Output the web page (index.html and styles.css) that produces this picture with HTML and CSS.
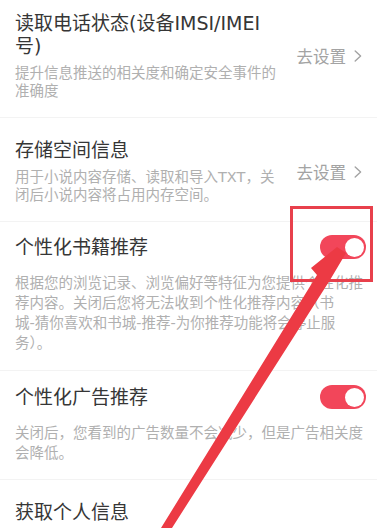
FILE: index.html
```html
<!DOCTYPE html>
<html lang="zh-CN">
<head>
<meta charset="utf-8">
<title>隐私设置</title>
<link rel="stylesheet" href="styles.css">
</head>
<body>
<div class="page">
  <div class="item item-link item-first">
    <div class="text">
      <div class="title title-narrow">读取电话状态(设备IMSI/IMEI号)</div>
      <div class="desc">提升信息推送的相关度和确定安全事件的准确度</div>
    </div>
    <div class="link">去设置<svg class="chev" width="8" height="12" viewBox="0 0 8 12"><polyline points="1.2,1 6.6,6 1.2,11" fill="none" stroke="#a3a3a3" stroke-width="1.4" stroke-linecap="round" stroke-linejoin="round"/></svg></div>
  </div>
  <div class="item item-link">
    <div class="text">
      <div class="title">存储空间信息</div>
      <div class="desc">用于小说内容存储、读取和导入TXT，关闭后小说内容将占用内存空间。</div>
    </div>
    <div class="link">去设置<svg class="chev" width="8" height="12" viewBox="0 0 8 12"><polyline points="1.2,1 6.6,6 1.2,11" fill="none" stroke="#a3a3a3" stroke-width="1.4" stroke-linecap="round" stroke-linejoin="round"/></svg></div>
  </div>
  <div class="item item-toggle">
    <div class="head">
      <div class="title">个性化书籍推荐</div>
      <div class="switch"><span class="knob"></span></div>
    </div>
    <div class="desc desc-wide">根据您的浏览记录、浏览偏好等特征为您提供个性化推荐内容。关闭后您将无法收到个性化推荐内容（书<span class="nobr">城-猜</span>你喜欢和书城-推荐-为你推荐功能将会停止服<span class="nobr">务）。</span></div>
  </div>
  <div class="item item-toggle item-toggle-last">
    <div class="head">
      <div class="title">个性化广告推荐</div>
      <div class="switch"><span class="knob"></span></div>
    </div>
    <div class="desc desc-wide">关闭后，您看到的广告数量不会减少，但是广告相关度会降低。</div>
  </div>
  <div class="item item-link item-last">
    <div class="text">
      <div class="title">获取个人信息</div>
    </div>
  </div>
</div>
<svg class="annot" width="391" height="528" viewBox="0 0 391 528">
  <rect x="291.5" y="207.5" width="80" height="73" fill="none" stroke="#e8404c" stroke-width="3"/>
  <polygon points="337,247 346,253 330,280 172,528 161,528 317,275 311,268" fill="#ec3a44"/>
</svg>
</body>
</html>
```
FILE: styles.css
```css
html, body {
  margin: 0;
  padding: 0;
  background: #ffffff;
}
body {
  width: 391px;
  height: 528px;
  overflow: hidden;
  position: relative;
  font-family: "DejaVu Sans", "Noto Sans CJK SC", sans-serif;
}
.page {
  display: flex;
  flex-direction: column;
}
.item {
  margin-right: 14px;
  padding-left: 15px;
  border-bottom: 1px solid #f3f3f3;
}
.item-link {
  display: flex;
  align-items: center;
  padding-top: 21px;
  padding-bottom: 17px;
  padding-right: 15px;
}
.item-first {
  padding-top: 12px;
}
.item-last {
  border-bottom: none;
}
.text {
  flex: 0 0 264px;
  display: flex;
  flex-direction: column;
  gap: 6px;
}
.title {
  font-size: 19px;
  line-height: 23px;
  color: #363636;
}
.title-narrow {
  max-width: 256px;
}
.desc {
  font-size: 14.5px;
  line-height: 18px;
  color: #b0b0b0;
}
.link {
  margin-left: auto;
  display: flex;
  align-items: center;
  gap: 8px;
  font-size: 16.5px;
  color: #a3a3a3;
  white-space: nowrap;
}
.chev {
  display: block;
}
.item-toggle {
  padding-top: 13px;
  padding-bottom: 17px;
  padding-right: 11px;
  display: flex;
  flex-direction: column;
  gap: 14px;
}
.item-toggle-last {
  padding-top: 14px;
  padding-bottom: 16px;
}
.head {
  display: flex;
  align-items: center;
  justify-content: space-between;
  height: 24px;
}
.desc-wide {
  line-height: 20px;
}
.nobr {
  white-space: nowrap;
}
.switch {
  width: 46px;
  height: 24px;
  border-radius: 12px;
  background: #f2465a;
  display: flex;
  align-items: center;
  justify-content: flex-end;
  padding-right: 2.5px;
  box-sizing: border-box;
}
.knob {
  width: 19px;
  height: 19px;
  border-radius: 50%;
  background: #ffffff;
}
.annot {
  position: absolute;
  left: 0;
  top: 0;
  pointer-events: none;
}
```
